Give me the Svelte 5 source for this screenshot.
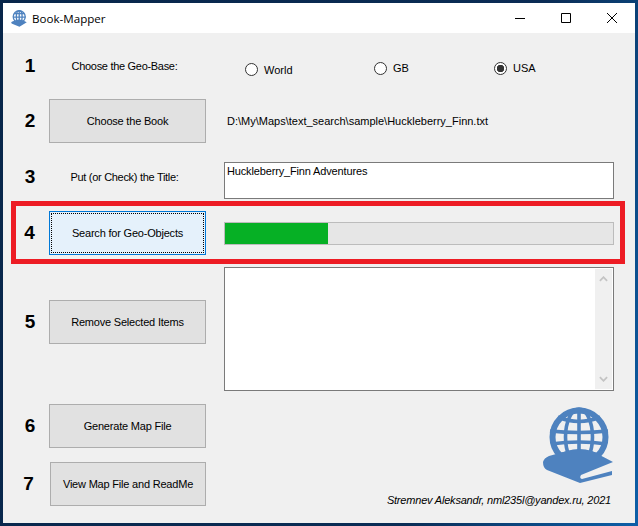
<script>
  const bases = [
    { name: 'World', checked: false },
    { name: 'GB', checked: false },
    { name: 'USA', checked: true }
  ];
  let progress = 26.5;
</script>

<div class="window">
  <header class="titlebar">
    <svg class="app-icon" viewBox="0 0 72 76" aria-hidden="true">
      <g fill="none" stroke="#4e82bf" stroke-width="6">
        <circle cx="37" cy="30" r="27" />
        <ellipse cx="37" cy="30" rx="13" ry="27" />
        <path d="M37 3V56M14 16H60M9 32H65" />
      </g>
      <path d="M1 56Q1 53 6 51L24 45Q37 40 50 45L71 55L38 75L5 62Q1 60 1 56Z" fill="#4e82bf" />
    </svg>
    <span class="app-name">Book-Mapper</span>
    <div class="caption">
      <svg viewBox="0 0 46 30"><path d="M18 15.5H28" /></svg>
      <svg viewBox="0 0 46 30"><path d="M18.5 10.5H27.5V19.5H18.5Z" /></svg>
      <svg viewBox="0 0 46 30"><path d="M18 10L28 20M28 10L18 20" /></svg>
    </div>
  </header>

  <main class="client">
    <section class="row first">
      <b class="num">1</b>
      <span class="label">Choose the Geo-Base:</span>
      <div class="radios">
        {#each bases as base}
          <span class="radio" class:on={base.checked}><i></i>{base.name}</span>
        {/each}
      </div>
    </section>

    <section class="row second">
      <b class="num">2</b>
      <button>Choose the Book</button>
      <span class="path">D:\My\Maps\text_search\sample\Huckleberry_Finn.txt</span>
    </section>

    <section class="row third">
      <b class="num">3</b>
      <span class="label">Put (or Check) the Title:</span>
      <div class="field title-box">Huckleberry_Finn Adventures</div>
    </section>

    <section class="row highlight">
      <b class="num">4</b>
      <button class="focused"><span>Search for Geo-Objects</span></button>
      <div class="progress"><div class="bar" style="width: {progress}%"></div></div>
    </section>

    <section class="row fifth">
      <b class="num">5</b>
      <button>Remove Selected Items</button>
      <div class="field list">
        <div class="scrollbar">
          <svg viewBox="0 0 10 6"><path d="M1 5L5 1L9 5" /></svg>
          <svg viewBox="0 0 10 6"><path d="M1 1L5 5L9 1" /></svg>
        </div>
      </div>
    </section>

    <div class="bottom">
      <div class="actions">
        <section class="row sixth">
          <b class="num">6</b>
          <button>Generate Map File</button>
        </section>
        <section class="row seventh">
          <b class="num">7</b>
          <button>View Map File and ReadMe</button>
        </section>
      </div>
      <aside class="about">
        <svg class="logo" viewBox="0 0 72 78" aria-hidden="true">
          <g fill="none" stroke="#4e82bf">
            <circle cx="37" cy="30" r="26.5" stroke-width="6" />
            <ellipse cx="37" cy="30" rx="13.5" ry="28" stroke-width="3.6" />
            <path d="M37 2V56" stroke-width="3.6" />
            <path d="M16 10Q37 19 58 10" stroke-width="3.6" />
            <path d="M8 24Q37 27 66 24" stroke-width="3.6" />
            <path d="M9 37Q37 33 65 37" stroke-width="3.6" />
            <path d="M17 48Q37 41 57 48" stroke-width="3.6" />
          </g>
          <path
            d="M1 55Q2 51 7 49L25 44Q37 40 50 44L71 55L39 68Q37 71 40 72L70 64V68L38 76L5 63Q1 61 1 55Z"
            fill="#4e82bf"
          />
        </svg>
        <em class="credit">Stremnev Aleksandr, nml235l@yandex.ru, 2021</em>
      </aside>
    </div>
  </main>
</div>

<style>
  :global(body) {
    background: linear-gradient(105deg, #08264a 0%, #0a2c55 70%, #0d5fa8 100%);
    height: 526px;
    overflow: hidden;
  }

  .window {
    width: 632px;
    height: 520px;
    margin: 3px;
    display: flex;
    flex-direction: column;
    background: #f0f0f0;
    font: 11px "Liberation Sans", Arial, sans-serif;
    color: #000;
  }

  .titlebar {
    height: 30px;
    flex: none;
    display: flex;
    align-items: center;
    background: #fff;
    padding-left: 8px;
  }
  .app-icon { width: 16px; height: 17px; margin-right: 5px; }
  .app-name { font: 11.6px "Open Sans", sans-serif; }
  .caption { margin-left: auto; display: flex; }
  .caption svg { width: 46px; height: 30px; fill: none; stroke: #000; stroke-width: 1; display: block; }

  .client { flex: 1; display: flex; flex-direction: column; }

  .row {
    display: grid;
    grid-template-columns: 46px 175px 390px;
    align-items: center;
  }
  .num {
    font: bold 19px "Liberation Sans", Arial, sans-serif;
    text-align: center;
    padding-left: 8px;
  }
  .label { text-align: center; width: 151px; letter-spacing: -0.3px; }

  button {
    height: 44px;
    width: 157px;
    padding: 0;
    background: #e1e1e1;
    border: 1px solid #adadad;
    font: inherit;
    color: #000;
    letter-spacing: -0.2px;
  }

  .first { height: 66px; }
  .radios {
    display: grid;
    grid-template-columns: 129px 120px auto;
    padding-left: 21px;
    margin-top: 4px;
  }
  .radio { display: flex; align-items: center; gap: 6px; }
  .radio:first-child { margin-top: 3px; }
  .radio i {
    width: 13px;
    height: 13px;
    box-sizing: border-box;
    border: 1px solid #333;
    border-radius: 50%;
    background: #fff;
    display: block;
  }
  .radio.on i { background: radial-gradient(circle, #333 0 3.5px, #fff 4px); }

  .path { padding-left: 3px; }
  .third { margin-top: 19px; }
  .third .num, .third .label { margin-bottom: 8px; }
  .field { box-sizing: border-box; background: #fff; border: 1px solid #7a7a7a; }
  .title-box { height: 37px; padding: 2px 2px; letter-spacing: -0.15px; }

  .highlight {
    margin: 2px 0 0 8px;
    width: 614px;
    height: 63px;
    box-sizing: border-box;
    border: 5px solid #ed1c24;
    grid-template-columns: 33px 175px 390px;
  }
  .highlight .num { padding-left: 0; padding-right: 6px; }
  .focused { background: #e5f1fb; border-color: #0078d7; display: grid; padding: 1px; }
  .focused span {
    display: flex;
    align-items: center;
    justify-content: center;
    border: 1px dotted #000;
  }
  .progress {
    height: 23px;
    margin-top: 1px;
    background: #e6e6e6;
    border: 1px solid #bcbcbc;
    box-sizing: border-box;
  }
  .bar { height: 100%; background: #06b025; }

  .fifth { margin-top: 3px; align-items: start; }
  .fifth .num { margin-top: 44px; }
  .fifth button { margin-top: 33px; }
  .list { height: 124px; display: flex; justify-content: flex-end; padding: 1px; }
  .scrollbar {
    width: 17px;
    background: #f0f0f0;
    display: flex;
    flex-direction: column;
    justify-content: space-between;
    align-items: center;
    padding: 7px 0;
    box-sizing: border-box;
  }
  .scrollbar svg { width: 9px; height: 6px; fill: none; stroke: #c4c4c4; stroke-width: 2; }

  .bottom { display: flex; margin-top: 13px; }
  .actions { width: 203px; flex: none; }
  .sixth { grid-template-columns: 46px 157px; }
  .seventh { grid-template-columns: 47px 156px; margin-top: 14px; }
  .seventh button { width: 156px; }
  .seventh .num { padding-left: 4px; }

  .about {
    width: 408px;
    display: flex;
    flex-direction: column;
    align-items: flex-end;
  }
  .logo { width: 72px; height: 78px; margin-top: 3px; }
  .credit { font-size: 11px; margin-top: 9px; margin-right: 3px; letter-spacing: -0.2px; }
</style>
